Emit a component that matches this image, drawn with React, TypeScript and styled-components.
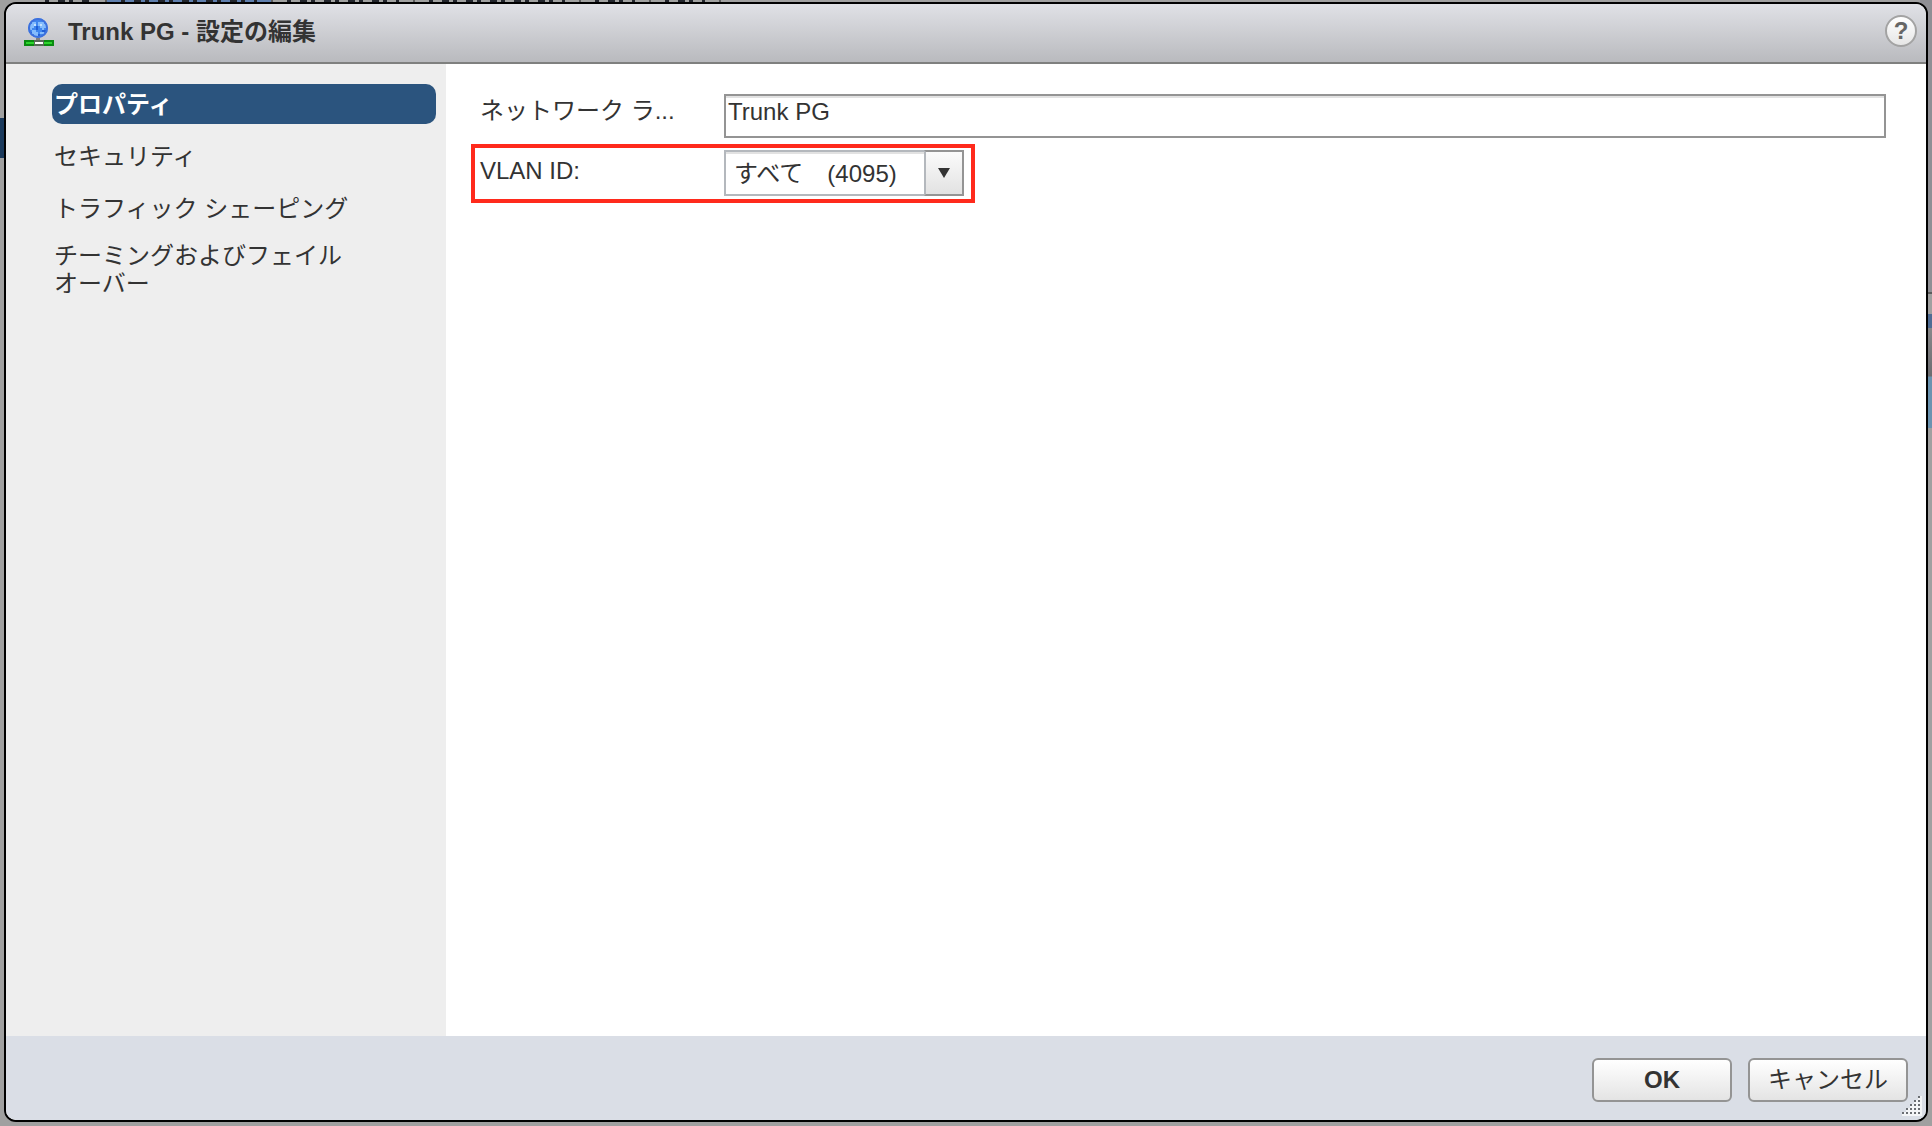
import React, { useState } from 'react';
import styled, { createGlobalStyle } from 'styled-components';

const ink = '#333333';
const line = '#949494';
const sans = '"Liberation Sans", "Noto Sans CJK JP", sans-serif';

const GlobalStyle = createGlobalStyle`
  * { box-sizing: border-box; }
  body { margin: 0; background: #a0a0a0; color: ${ink}; font: 24px/28px ${sans}; }
  button, input, select { font: inherit; color: inherit; margin: 0; }
`;

const Page = styled.div`
  position: relative;
  display: flex;
  min-height: 100vh;
  padding: 2px 4px 4px;
  overflow: hidden;
`;

const TabStrip = styled.div`
  position: absolute;
  top: 0;
  left: 31px;
  display: flex;
  height: 2px;
`;

const BackTab = styled.div<{ $width: number; $active?: boolean }>`
  width: ${(p) => p.$width}px;
  padding: 0 14px;
  border-right: 2px solid #5c5c5c;
  background: ${(p) => (p.$active ? '#5f7fae' : '#a0a1a0')};

  &::before {
    content: '';
    display: block;
    height: 2px;
    background: repeating-linear-gradient(90deg, #22252c 0 4px, transparent 4px 13px, #22252c 13px 20px, transparent 20px 24px);
  }
`;

const LeftEdge = styled.div`
  position: absolute;
  top: 118px;
  left: 0;
  width: 4px;
  height: 40px;
  background: #1b3a5c;
`;

const RightEdge = styled.div`
  position: absolute;
  top: 0;
  right: 0;
  bottom: 0;
  width: 12px;
  background: linear-gradient(#8f8f94 0 292px, #5c5c5c 292px 294px, #a0a0a0 294px 314px, #4f6c94 314px 328px, #88888a 328px, #6c6c70 376px, #6a93b0 377px 428px, #a0a0a0 428px);
`;

const Dialog = styled.section`
  position: relative;
  flex: 1;
  display: flex;
  flex-direction: column;
  border: 2px solid #000;
  border-radius: 12px;
  background: #fff;
  overflow: hidden;
`;

const Header = styled.header`
  display: flex;
  align-items: center;
  gap: 14px;
  height: 60px;
  padding: 0 9px 4px 18px;
  border-bottom: 2px solid #7f807f;
  background: linear-gradient(#e0e1e6, #b9babe);
`;

const Title = styled.h1`
  flex: 1;
  margin: 0;
  padding-top: 2px;
  font-size: 24px;
  line-height: 28px;
`;

const HelpButton = styled.button`
  width: 32px;
  height: 32px;
  padding: 0;
  border: 2px solid #a3a3a3;
  border-radius: 50%;
  background: linear-gradient(#fff, #e6e6e6);
  color: #666;
  font-weight: 700;
`;

const Body = styled.div`
  flex: 1;
  display: flex;
`;

const Sidebar = styled.nav`
  display: flex;
  flex-direction: column;
  gap: 12px;
  width: 440px;
  padding: 20px 10px 20px 46px;
  background: #eee;
`;

const NavItem = styled.button<{ $active?: boolean }>`
  min-height: 40px;
  padding: 2px 80px 0 2px;
  border: 0;
  border-radius: 10px;
  background: ${(p) => (p.$active ? '#2b547e' : 'transparent')};
  color: ${(p) => (p.$active ? '#fff' : ink)};
  font-weight: ${(p) => (p.$active ? 700 : 400)};
  line-height: 28px;
  text-align: left;
`;

const Form = styled.form`
  flex: 1;
  display: flex;
  flex-direction: column;
  gap: 6px;
  padding: 30px 40px 30px 25px;
`;

const Row = styled.div<{ $marked?: boolean }>`
  display: flex;
  align-self: ${(p) => (p.$marked ? 'flex-start' : 'stretch')};
  border: solid ${(p) => (p.$marked ? '#ff2a1c' : 'transparent')};
  border-width: ${(p) => (p.$marked ? '4px' : '0 0 0 4px')};
  padding: ${(p) => (p.$marked ? '2px 7px 3px 5px' : '0 0 0 5px')};
`;

const Label = styled.label<{ $low?: boolean }>`
  width: 244px;
  padding-top: ${(p) => (p.$low ? '7px' : '3px')};
`;

const TextBox = styled.input`
  flex: 1;
  min-width: 0;
  height: 44px;
  padding: 0 2px 8px;
  border: 2px solid ${line};
  border-radius: 0;
  box-shadow: inset 0 2px #e2e2e2;
  outline: 0;
`;

const Picker = styled.div`
  display: grid;
  grid-template-columns: 200px 40px;
  height: 46px;
`;

const Select = styled.select`
  grid-area: 1 / 1 / 2 / 3;
  appearance: none;
  padding: 2px 40px 0 8px;
  border: 2px solid #b4b8bd;
  border-radius: 0;
  background: #fff;
  box-shadow: inset 0 2px #e2e2e2;
  outline: 0;
`;

const Arrow = styled.span`
  grid-area: 1 / 2;
  z-index: 1;
  display: grid;
  place-items: center;
  border: 2px solid ${line};
  border-left-color: #b4b8bd;
  background: linear-gradient(#fbfbfb, #e2e2e2);
  pointer-events: none;
`;

const Footer = styled.footer`
  display: flex;
  justify-content: flex-end;
  align-items: center;
  gap: 16px;
  height: 84px;
  padding: 4px 18px 0;
  background: #dadee6;
`;

const Action = styled.button<{ $primary?: boolean }>`
  width: ${(p) => (p.$primary ? '140px' : '160px')};
  height: 44px;
  padding: 0;
  border: 2px solid ${line};
  border-radius: 6px;
  background: linear-gradient(#fff, #e4e4e4);
  font-weight: ${(p) => (p.$primary ? 700 : 400)};
`;

const Grip = styled.svg`
  position: absolute;
  right: 4px;
  bottom: 4px;
`;

const sections = ['プロパティ', 'セキュリティ', 'トラフィック シェーピング', 'チーミングおよびフェイルオーバー'];
const gripRows = [1, 2, 3, 4, 5];

const NetworkIcon = () => (
  <svg width="30" height="30" viewBox="0 0 30 30" aria-hidden="true">
    <circle cx="14" cy="12" r="10" fill="#3f86ee" />
    <path d="M8 6h4v2h-2v4H8v2H6V8h2zM14 6h6v2h2v4h-2v2h-2v-2h-2v-2h-2zM8 14h4v2h2v4h-4v-2H8zM16 16h4v2h-4z" fill="#84bcfc" />
    <path d="M10 8h2v2h-2zM16 8h2v2h-2z" fill="#c4e2ff" />
    <path d="M12 10h2v4h-2zM18 14h4v2h-4zM6 16h2v2H6zM14 18h2v2h-2z" fill="#1f5fd6" />
    <circle cx="14" cy="12" r="9" fill="none" stroke="#3d70dc" strokeWidth="2" />
    <path d="M12 22h4v2h-4z" fill="#808080" />
    <path d="M0 24h30v6H0z" fill="#0a8a10" />
    <path d="M2 26h8v2H2zM20 26h8v2h-8z" fill="#2cd42c" />
    <path d="M10 24h10v6H10z" fill="#5a6a5a" />
    <path d="M11 26h8v2h-8z" fill="#fff" />
  </svg>
);

export default function App() {
  const [active, setActive] = useState(0);
  return (
    <Page>
      <GlobalStyle />
      <TabStrip aria-hidden="true">
        <BackTab $width={76} />
        <BackTab $width={166} $active />
        <BackTab $width={142} />
        <BackTab $width={166} />
        <BackTab $width={70} />
        <BackTab $width={70} />
      </TabStrip>
      <LeftEdge />
      <RightEdge />
      <Dialog role="dialog" aria-labelledby="title">
        <Header>
          <NetworkIcon />
          <Title id="title">Trunk PG - 設定の編集</Title>
          <HelpButton type="button">?</HelpButton>
        </Header>
        <Body>
          <Sidebar>
            {sections.map((name, i) => (
              <NavItem key={name} $active={i === active} onClick={() => setActive(i)}>{name}</NavItem>
            ))}
          </Sidebar>
          <Form id="settings" onSubmit={(e) => e.preventDefault()}>
            <Row>
              <Label htmlFor="network">ネットワーク ラ...</Label>
              <TextBox id="network" defaultValue="Trunk PG" />
            </Row>
            <Row $marked>
              <Label htmlFor="vlan" $low>VLAN ID:</Label>
              <Picker>
                <Select id="vlan">
                  <option>すべて　(4095)</option>
                </Select>
                <Arrow>
                  <svg width="12" height="10" viewBox="0 0 12 10"><path d="M0 0h12L6 10z" fill={ink} /></svg>
                </Arrow>
              </Picker>
            </Row>
          </Form>
        </Body>
        <Footer>
          <Action $primary form="settings">OK</Action>
          <Action type="button">キャンセル</Action>
        </Footer>
        <Grip width="20" height="20" viewBox="0 0 20 20" aria-hidden="true">
          {gripRows.map((n) =>
            gripRows.slice(0, n).map((k) => (
              <g key={`${n}-${k}`}>
                <rect x={20 - k * 4} y={n * 4 - 4} width="4" height="4" fill="#f4f5f7" />
                <rect x={20 - k * 4} y={n * 4 - 4} width="2" height="2" fill="#6b6e73" />
              </g>
            )),
          )}
        </Grip>
      </Dialog>
    </Page>
  );
}
